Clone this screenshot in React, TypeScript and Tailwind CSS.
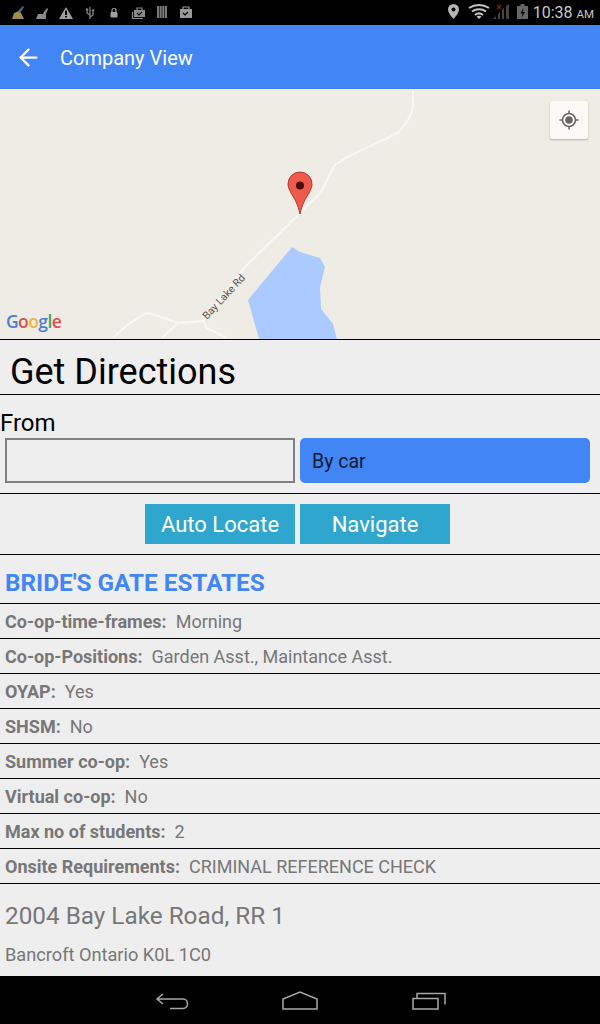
/**
 * Company View page - map, directions form and company details
 */
import React from "react";
import { ArrowLeft } from "lucide-react";

const details = [
  { label: "Co-op-time-frames:", value: "Morning" },
  { label: "Co-op-Positions:", value: "Garden Asst., Maintance Asst." },
  { label: "OYAP:", value: "Yes" },
  { label: "SHSM:", value: "No" },
  { label: "Summer co-op:", value: "Yes" },
  { label: "Virtual co-op:", value: "No" },
  { label: "Max no of students:", value: "2" },
  { label: "Onsite Requirements:", value: "CRIMINAL REFERENCE CHECK" },
];

const StatusBar: React.FC = () => (
  <div className="flex h-[25px] shrink-0 items-center justify-between bg-black pr-[6px]">
    <svg width="200" height="25" viewBox="0 0 200 25">
      {/* broom */}
      <path d="M12 19l2-6 5-2 2 2 3 6z" fill="#a08c50" />
      <path d="M18 11l5-5 1 1-4 6z" fill="#3f6f9f" />
      <path d="M36 19l2-5h5l1-2 3-4 1 1-2 5v5z" fill="#8a8a8a" />
      {/* warning */}
      <path d="M66 7l7 12H59z" fill="#a0a0a0" />
      <rect x="65" y="10.500" width="2" height="4.500" fill="#000" />
      <rect x="65" y="16" width="2" height="1.500" fill="#000" />
      {/* usb */}
      <path d="M90 7v12M90 15l-3-2v-3M90 17l3-2v-3" stroke="#8a8a8a" strokeWidth="1.200" fill="none" />
      <rect x="85.800" y="8.500" width="2.400" height="2" fill="#8a8a8a" />
      <circle cx="93" cy="10.500" r="1.300" fill="#8a8a8a" />
      {/* lock */}
      <rect x="110.500" y="12" width="7" height="5.500" rx="1" fill="#a0a0a0" />
      <path d="M112 12v-1.500a2 2 0 014 0V12" stroke="#a0a0a0" strokeWidth="1.200" fill="none" />
      {/* stacked briefcases */}
      <rect x="134" y="10" width="11" height="7" fill="#8a8a8a" />
      <path d="M137 10V8h5v2M132.500 12v6.500H143" stroke="#8a8a8a" strokeWidth="1.200" fill="none" />
      <path d="M137 13l2 2 3-3" stroke="#000" strokeWidth="1.200" fill="none" />
      {/* barcode */}
      <path d="M157 6h10v12h-10z" fill="#777" />
      <path d="M159.500 6v12M162 6v12M164.500 6v12" stroke="#222" strokeWidth="0.800" />
      {/* briefcase */}
      <rect x="180" y="9" width="12" height="9" fill="#999" />
      <path d="M183 9V7h6v2" stroke="#999" strokeWidth="1.200" fill="none" />
      <path d="M183 13l2 2 3-3" stroke="#000" strokeWidth="1.200" fill="none" />
    </svg>
    <div className="flex items-center">
      <svg width="86" height="25" viewBox="0 0 86 25">
        <path d="M6.500 4a5.500 5.500 0 00-5.500 5.500c0 3.800 5.500 9.500 5.500 9.500s5.500-5.700 5.500-9.500A5.500 5.500 0 006.500 4z" fill="#b5b5b5" />
        <circle cx="6.500" cy="9.500" r="2" fill="#000" />
        <path d="M22 8c6-4 14-4 20 0M25 11.500c4-3 10-3 14 0M28 15c2.500-2 5.500-2 8 0" stroke="#c4c4c4" strokeWidth="2" fill="none" />
        <path d="M32 19l-2.500-2.500c1.500-1 3.500-1 5 0z" fill="#c4c4c4" />
        <path d="M46 19l3-3v3zM51 19v-5l2-2v7zM55 19v-9l2-2v11zM59 19V6l3-2v15z" fill="#444" />
        <path d="M50 5l4 4M54 5l-4 4" stroke="#7a1f1f" strokeWidth="1.400" />
        <rect x="70" y="6" width="11" height="13" fill="#666" />
        <rect x="73.500" y="4" width="4" height="2" fill="#666" />
        <path d="M76.500 8l-3 5.500h2l-1 4 3.500-5.500h-2z" fill="#000" />
      </svg>
      <span className="font-['Roboto',sans-serif] text-[16px] leading-none text-[#c8c8c8]">
        10:38 <span className="text-[11.5px]">AM</span>
      </span>
    </div>
  </div>
);

const MapView: React.FC = () => (
  <div className="relative h-[250px] shrink-0 overflow-hidden bg-[#efece5]">
    <svg width="600" height="250" viewBox="0 89 600 250" className="block">
      <path d="M292 247l8 5 20 6 5 9-5 20 1 22 12 15 4 15h-78l-11-39z" fill="#abcaff" />
      <g stroke="#f8f7f3" strokeWidth="2" fill="none">
        <path d="M413 90v13c0 7-2 12-5 17l-10 13-51 24-12 8c-6 8-9 20-15 28l-20 20-55 54-42 54" />
        <path d="M245 267l-42 54-25 2-26-9c-5-1-9 0-12 3-9 4-18 12-27 21" />
        <path d="M178 323l-16 15" />
        <path d="M203 321l4 7 20 10" />
      </g>
      <text x="0" y="0" transform="translate(207 320) rotate(-47)" fontFamily="Roboto, sans-serif" fontSize="10.500" fill="#555">
        Bay Lake Rd
      </text>
      <path d="M300 214c-2-10-6-16-9-21-2-4-3-6-3-9a12 12 0 0124 0c0 3-1 5-3 9-3 5-7 11-9 21z" fill="#ee5a4c" stroke="#b03a2e" strokeWidth="1" />
      <circle cx="300" cy="185.500" r="4" fill="#4a0f0a" />
      <text x="6" y="328" fontFamily="'Open Sans', sans-serif" fontSize="17.500" fontWeight="600" letterSpacing="-0.6">
        <tspan fill="#4a80d8">G</tspan>
        <tspan fill="#d9534a">o</tspan>
        <tspan fill="#eab93e">o</tspan>
        <tspan fill="#4a80d8">g</tspan>
        <tspan fill="#4aa060">l</tspan>
        <tspan fill="#d9534a">e</tspan>
      </text>
    </svg>
    <div className="absolute left-[550px] top-[12px] flex h-[38px] w-[38px] items-center justify-center rounded-[2px] bg-[#faf9f6] shadow-[0_1px_2px_rgba(0,0,0,0.25)]">
      <svg width="24" height="24" viewBox="0 0 24 24">
        <circle cx="12" cy="12" r="6.500" fill="none" stroke="#666" strokeWidth="1.500" />
        <circle cx="12" cy="12" r="3.800" fill="#666" />
        <path d="M12 2.500v3M12 18.500v3M2.500 12h3M18.500 12h3" stroke="#666" strokeWidth="1.500" />
      </svg>
    </div>
  </div>
);

const NavBar: React.FC = () => (
  <div className="mt-auto flex h-[48px] shrink-0 items-center justify-center bg-black">
    <svg width="400" height="48" viewBox="0 0 400 48">
      <g stroke="#a8a8a8" strokeWidth="1.500" fill="none">
        <path d="M63 18l-6 5 6 5M57 23h26c6 0 6 9.500 0 9.500H70" />
        <path d="M183 33V23l17-7 17 7v10z" />
        <path d="M313 22.500h25V33h-25zM317 22v-4.500h28v11" />
      </g>
    </svg>
  </div>
);

const App: React.FC = () => {
  return (
    <div className="flex h-[1024px] w-[600px] flex-col overflow-hidden bg-[#eeeeee] font-['Roboto',sans-serif]">
      <StatusBar />

      {/* Header */}
      <div className="flex h-[64px] shrink-0 items-center bg-[#4285f4] pl-[15px] pt-[1px] text-white">
        <ArrowLeft size={27} strokeWidth={2} />
        <span className="ml-[18px] text-[20px]">Company View</span>
      </div>

      <MapView />

      {/* Directions */}
      <div className="flex h-[56px] shrink-0 items-center border-y border-black pl-[10px] pt-[9px] text-[36px] leading-none text-black">
        Get Directions
      </div>
      <div className="h-[99px] shrink-0 border-b border-black">
        <div className="pt-[14px] text-[24px] leading-[28px] text-black">From</div>
        <div className="mt-[1px] flex gap-[5px] pl-[5px]">
          <div className="h-[45px] w-[290px] border-2 border-[#808080]" />
          <div className="flex h-[45px] w-[290px] items-center rounded-[5px] bg-[#4285f4] pl-[12px] pt-[2px] text-[19.5px] text-[#0c1a33]">
            By car
          </div>
        </div>
      </div>
      <div className="flex h-[61px] shrink-0 items-center justify-center gap-[5px] border-b border-black pr-[5px]">
        <div className="flex h-[40px] w-[150px] items-center justify-center bg-[#2ea6cd] text-[22px] text-white">
          Auto Locate
        </div>
        <div className="flex h-[40px] w-[150px] items-center justify-center bg-[#2ea6cd] text-[22px] text-white">
          Navigate
        </div>
      </div>

      {/* Company details */}
      <div className="flex h-[49px] shrink-0 items-center border-b border-black pl-[5px] pt-[8px] text-[24.3px] font-bold text-[#4285f4]">
        BRIDE'S GATE ESTATES
      </div>
      {details.map((d) => (
        <div
          key={d.label}
          className="flex h-[35px] shrink-0 items-center border-b border-black pl-[5px] text-[18px] text-[#777777]"
        >
          <span className="mr-[9px] font-bold">{d.label}</span>
          <span>{d.value}</span>
        </div>
      ))}
      <div className="pl-[5px] pt-[18px] text-[24.3px] leading-[28px] text-[#777777]">
        2004 Bay Lake Road, RR 1
      </div>
      <div className="pl-[5px] pt-[13px] text-[18.2px] leading-[24px] text-[#777777]">
        Bancroft Ontario K0L 1C0
      </div>

      <NavBar />
    </div>
  );
};

export default App;
